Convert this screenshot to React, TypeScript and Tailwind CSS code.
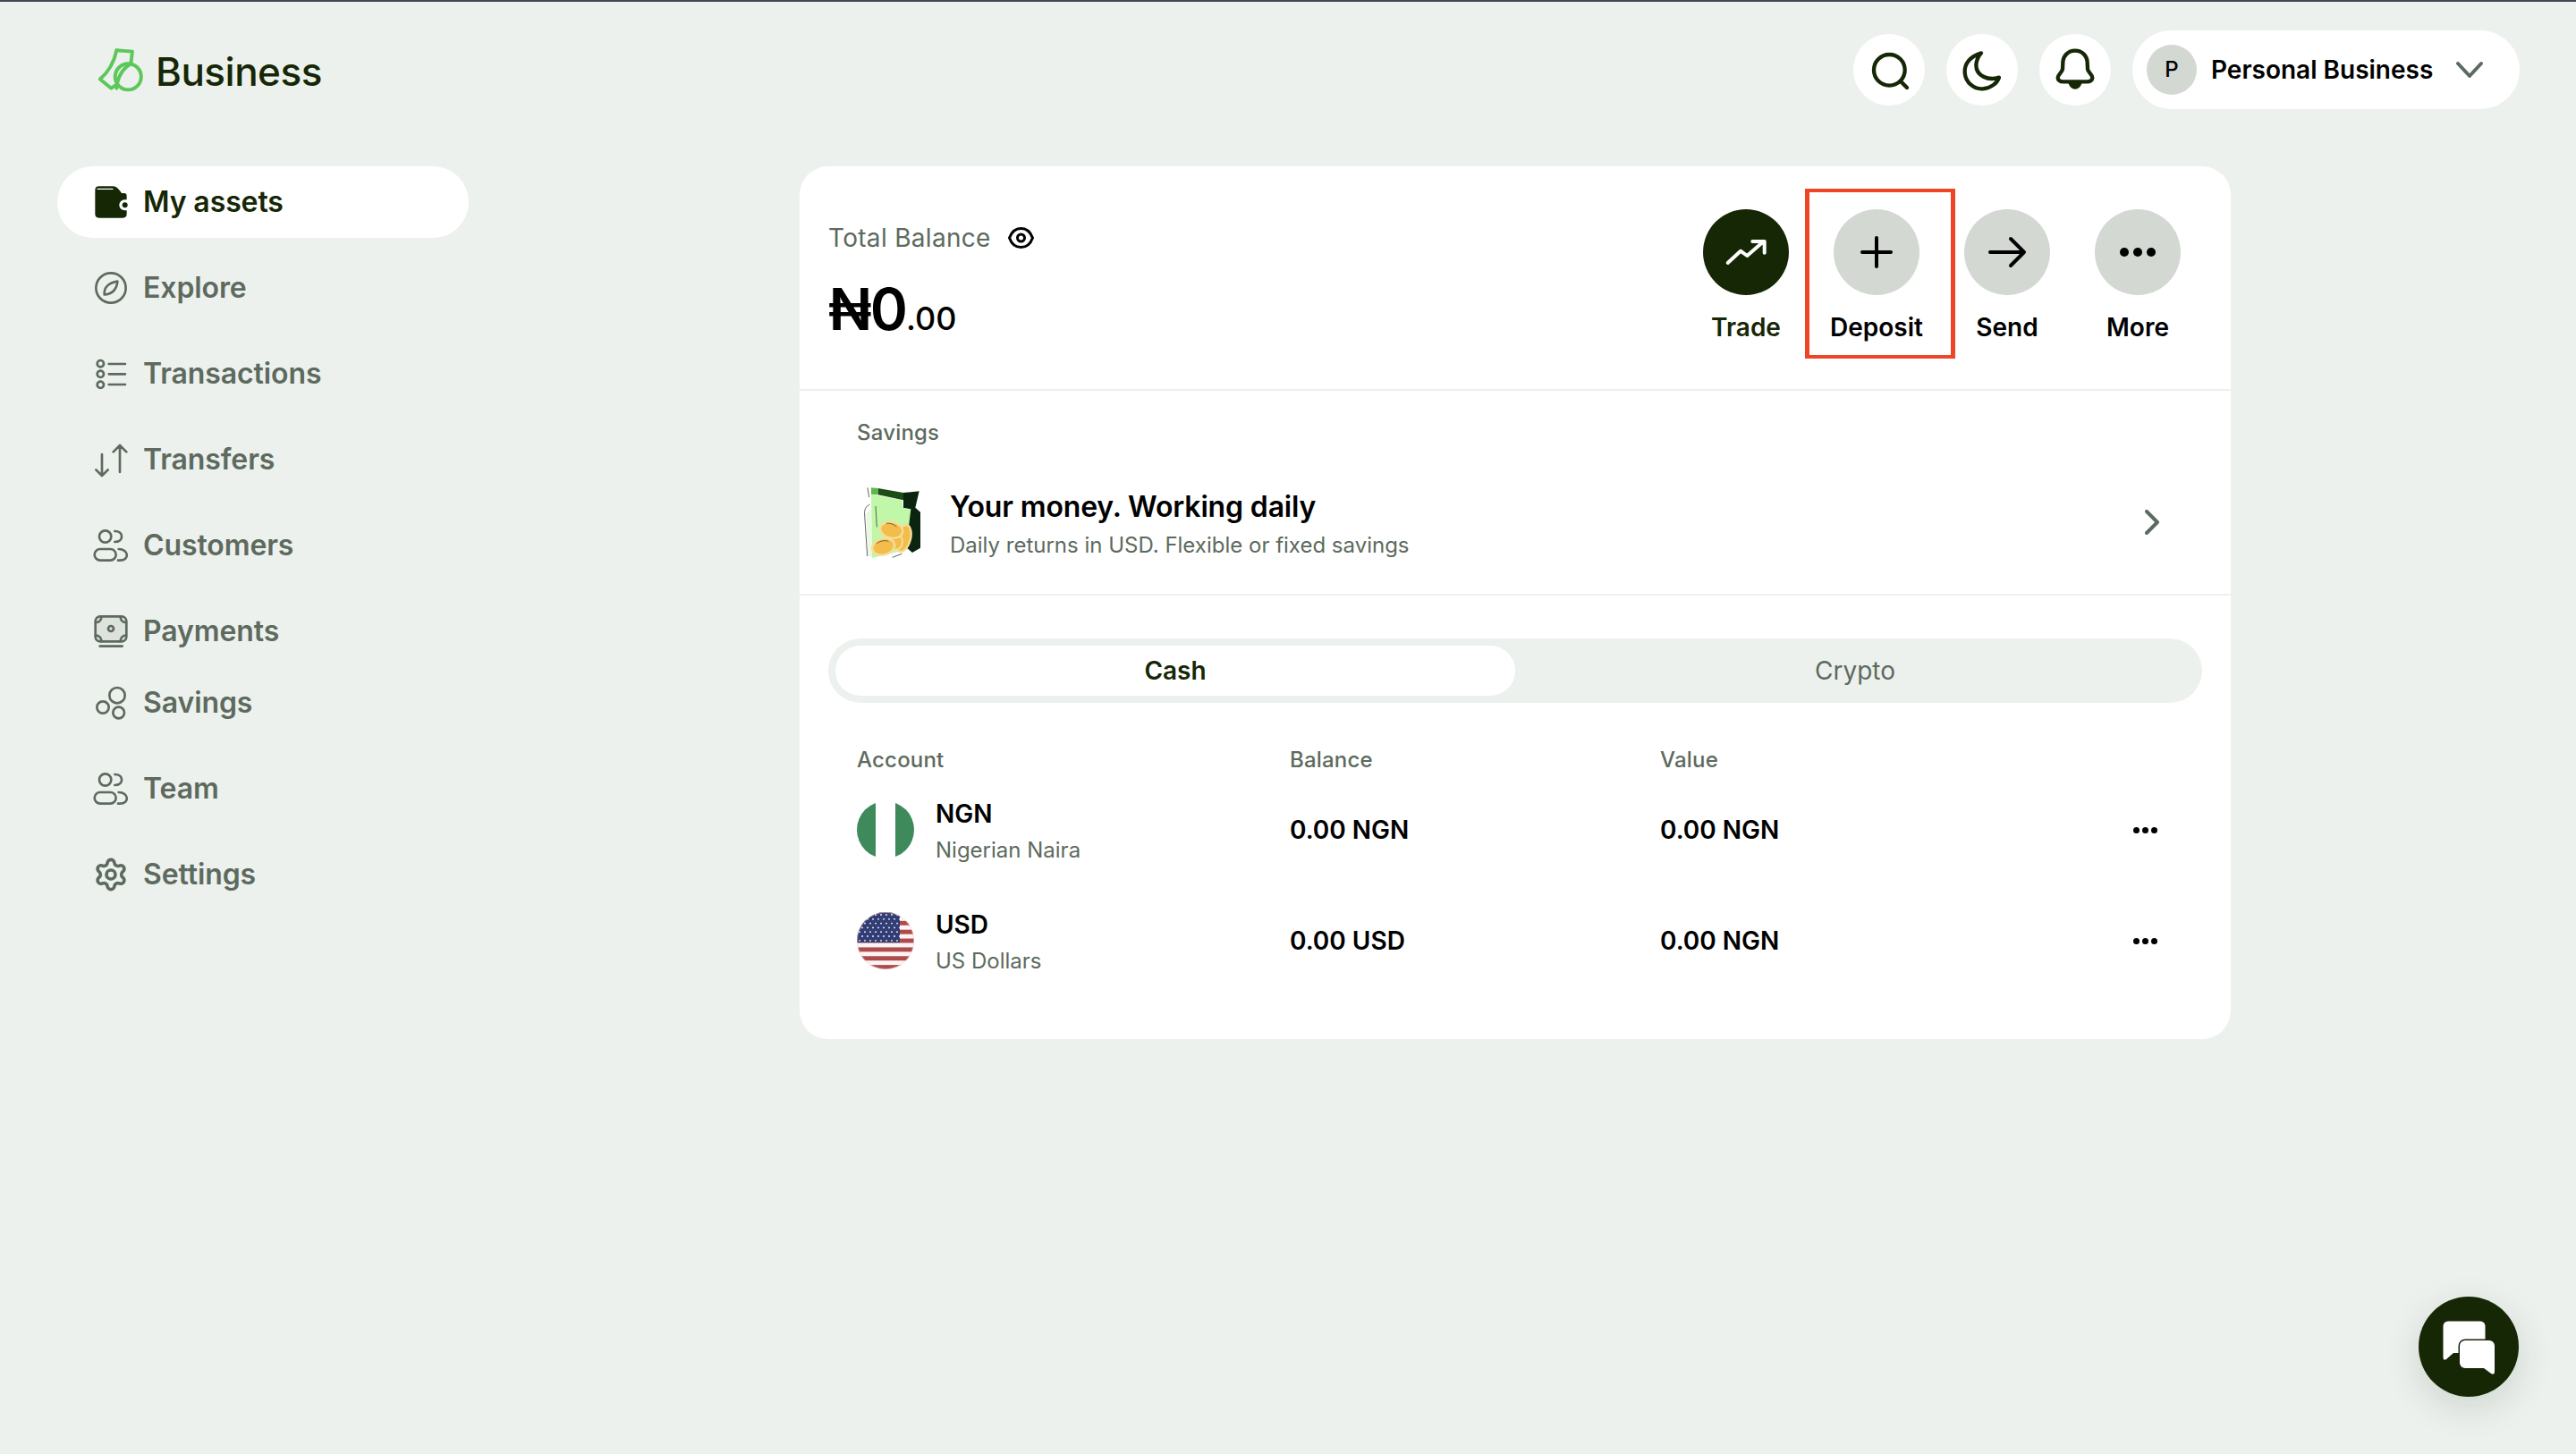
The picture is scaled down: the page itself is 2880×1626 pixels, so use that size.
import React from "react";
import { Settings } from "lucide-react";

const DARK = "#162706";
const GRAY = "#5d6a5e";

function IconBox({ children }: { children: React.ReactNode }) {
  return (
    <svg viewBox="0 0 108 108" className="w-9 h-9 shrink-0 overflow-visible" fill="none" stroke={GRAY} strokeWidth={8} strokeLinecap="round" strokeLinejoin="round">
      {children}
    </svg>
  );
}

function Wallet() {
  return (
    <svg viewBox="0 0 108 108" className="w-9 h-9 shrink-0 overflow-visible">
      <path fill={DARK} d="M14 1 H62 C72 1 80 10 90 24 H98 Q107 24 107 33 V94 Q107 107 94 107 H14 Q1 107 1 94 V14 Q1 1 14 1 Z" />
      <path d="M9 10 H60" stroke="#fff" strokeWidth={4} strokeLinecap="round" fill="none" />
      <path fill="#fff" d="M108 46 H100 A18 18 0 0 0 100 82 H108 Z" />
      <circle cx={101} cy={64} r={9} fill={DARK} />
    </svg>
  );
}

function Users() {
  return (
    <IconBox>
      <circle cx={35} cy={24} r={20} />
      <path d="M67 6 C98 6 98 42 67 42" />
      <rect x={-1} y={66} width={72} height={38} rx={19} />
      <path d="M80 66 C114 66 118 104 84 104 H78" />
    </IconBox>
  );
}

const nav = [
  { label: "Explore", icon: <IconBox><circle cx={54} cy={54} r={50} /><path d="M32 76 C30 50 50 36 76 32 C74 58 58 76 32 76 Z" /></IconBox> },
  {
    label: "Transactions",
    icon: (
      <IconBox>
        <circle cx={19} cy={20} r={11} /><circle cx={19} cy={55} r={11} /><circle cx={19} cy={91} r={11} />
        <path d="M47 21 H102 M47 55 H102 M47 90 H102" />
      </IconBox>
    ),
  },
  { label: "Transfers", icon: <IconBox><path d="M84 96 V6 M62 28 L84 6 L106 28 M24 36 V108 M4 88 L24 108 L44 88" /></IconBox> },
  { label: "Customers", icon: <Users /> },
];

function NavItem({ icon, label, active }: { icon: React.ReactNode; label: string; active?: boolean }) {
  return (
    <div className={`h-20 flex items-center gap-[18px] pl-[42px] rounded-full text-[32px] leading-10 font-semibold tracking-[-0.1px] ${active ? "bg-white text-[#162706]" : "text-[#5d6a5e]"}`}>
      {icon}
      <span>{label}</span>
    </div>
  );
}

function Sidebar() {
  return (
    <nav className="w-[460px] ml-16 shrink-0 flex flex-col gap-4">
      <NavItem active icon={<Wallet />} label="My assets" />
      {nav.map((n) => (
        <NavItem key={n.label} icon={n.icon} label={n.label} />
      ))}
      <div className="flex flex-col">
        <NavItem
          label="Payments"
          icon={
            <IconBox>
              <rect x={2} y={4} width={104} height={84} rx={16} fill="#dde2dd" />
              <circle cx={54} cy={45} r={9} />
              <path d="M3 24 C14 24 22 16 22 5 M105 24 C94 24 86 16 86 5 M3 68 C14 68 22 76 22 87 M105 68 C94 68 86 76 86 87 M17 104 H92" />
            </IconBox>
          }
        />
        <NavItem
          label="Savings"
          icon={
            <IconBox>
              <circle cx={75} cy={29} r={26} /><circle cx={27} cy={69} r={20} /><circle cx={80} cy={87} r={19} />
            </IconBox>
          }
        />
      </div>
      <NavItem icon={<Users />} label="Team" />
      <NavItem icon={<Settings size={40} strokeWidth={2.2} color={GRAY} className="shrink-0 -m-0.5" />} label="Settings" />
    </nav>
  );
}

function RoundBtn({ children }: { children: React.ReactNode }) {
  return (
    <button className="w-20 h-20 rounded-full bg-white flex items-center justify-center">
      <svg viewBox="0 0 240 240" className="w-20 h-20" fill="none" stroke={DARK} strokeWidth={13} strokeLinecap="round" strokeLinejoin="round">
        {children}
      </svg>
    </button>
  );
}

function Header() {
  return (
    <header className="flex items-center justify-between pl-[107px] pr-[63px] pt-8">
      <div className="flex items-center gap-[12px]">
        <svg viewBox="140 155 165 160" className="w-[55px] h-[53px]" fill="none" stroke="#5cc85a" strokeWidth={12} strokeLinejoin="round" strokeLinecap="round">
          <path d="M210 168 L263 172 L258 215" />
          <path d="M210 168 C202 205 186 238 154 265 L192 296 L212 282" />
          <circle cx={249} cy={257} r={44} />
          <path d="M258 214 C232 228 212 258 210 296" />
        </svg>
        <span className="mt-[3px] text-[44px] leading-[56px] font-medium text-[#162706] tracking-[-0.5px]">Business</span>
      </div>
      <div className="flex items-center gap-6">
        <RoundBtn>
          <circle cx={121} cy={121} r={52} />
          <path d="M159 159 L180 180" />
        </RoundBtn>
        <RoundBtn>
          <path d="M117 64 C80 75 60 100 62 130 C65 165 95 186 122 184 C150 182 170 165 177 146 C140 158 100 140 100 105 C100 90 108 72 117 64 Z" />
        </RoundBtn>
        <RoundBtn>
          <path d="M120 56 C97 56 80 72 79 96 L78 118 C76 130 62 136 62 147 C62 155 70 160 80 160 H160 C170 160 178 155 178 147 C178 136 164 130 162 118 L161 96 C160 72 143 56 120 56 Z" />
          <path d="M100 164 C104 175 112 182 120 182 C128 182 136 175 140 164 Z" fill={DARK} strokeWidth={6} />
        </RoundBtn>
        <div className="w-[433px] h-[88px] rounded-full bg-white flex items-center pl-4">
          <span className="w-14 h-14 rounded-full bg-[#d3d8d3] flex items-center justify-center text-2xl font-medium text-black">P</span>
          <span className="ml-4 text-[28px] leading-9 font-semibold text-black">Personal Business</span>
          <svg viewBox="0 0 32 20" className="w-8 h-5 ml-[25px]" fill="none" stroke={GRAY} strokeWidth={4} strokeLinecap="round" strokeLinejoin="round">
            <path d="M3 3 L16 17 L29 3" />
          </svg>
        </div>
      </div>
    </header>
  );
}

function Action({ label, dark, highlight, children }: { label: string; dark?: boolean; highlight?: boolean; children: React.ReactNode }) {
  return (
    <div className="relative w-24 flex flex-col items-center">
      <div className={`w-24 h-24 rounded-full ${dark ? "bg-[#162706]" : "bg-[#d3d8d3]"}`}>
        <svg viewBox="0 0 96 96" className="w-24 h-24" fill="none" stroke={dark ? "#fff" : "#000"} strokeWidth={4} strokeLinecap="round" strokeLinejoin="round">
          {children}
        </svg>
      </div>
      <span className={`mt-[18px] text-[28px] leading-9 font-semibold whitespace-nowrap ${dark ? "text-[#162706]" : "text-black"}`}>{label}</span>
      {highlight && <div className="absolute left-[-32px] top-[-23px] w-[168px] h-[190px] border-x-[5px] border-y-[4px] border-[#ee4527]" />}
    </div>
  );
}

function BalanceHeader() {
  return (
    <section className="h-[249px] flex justify-between pl-8 pr-14">
      <div className="pt-[60px]">
        <div className="flex items-center gap-[19px] text-[28px] leading-10 tracking-[0.3px] text-[#5d6a5e]">
          <span>Total Balance</span>
          <svg viewBox="0 0 29 24" className="w-[29px] h-6" fill="none" stroke="#000" strokeWidth={3}>
            <path d="M1.5 12 C4 5 9 1.5 14.5 1.5 C20 1.5 25 5 27.5 12 C25 19 20 22.5 14.5 22.5 C9 22.5 4 19 1.5 12 Z" />
            <circle cx={14.5} cy={12} r={4} />
          </svg>
        </div>
        <div className="mt-7 flex items-baseline text-black leading-[64px]">
          <span className="text-[64px] font-semibold tracking-[-2px]">₦0</span>
          <span className="text-[36px] font-medium">.00</span>
        </div>
      </div>
      <div className="pt-12 flex gap-[50px]">
        <Action label="Trade" dark>
          <path d="M27.7 60 L42 46.7 L49.3 52 L67.7 36 M55.3 36 H68.7 V48.7" />
        </Action>
        <Action label="Deposit" highlight>
          <path d="M48 32 V64 M32 48 H64" />
        </Action>
        <Action label="Send">
          <path d="M29 48 H67 M52 33 L67 48 L52 63" />
        </Action>
        <Action label="More">
          <circle cx={33} cy={48} r={5} fill="#000" stroke="none" />
          <circle cx={48} cy={48} r={5} fill="#000" stroke="none" />
          <circle cx={63} cy={48} r={5} fill="#000" stroke="none" />
        </Action>
      </div>
    </section>
  );
}

function Jar() {
  return (
    <svg viewBox="9 0 261 288" className="w-[87px] h-24 shrink-0">
      <path d="M57 50 L160 70 L165 95 L190 100 L195 232 L60 264 Z" fill="#c0f7a8" />
      <path d="M57 28 L80 30 L80 52 L57 50 Z" fill="#5cb84a" />
      <path d="M80 30 L165 45 L165 70 L80 52 Z" fill="#1d4d16" />
      <path d="M165 45 L218 40 L205 95 L222 110 L222 230 L195 246 L175 228 L190 100 L165 95 Z" fill="#0a2410" />
      <path d="M45 28 L50 60 M52 85 C40 90 33 100 35 120 L44 258 M72 90 L76 160 M128 262 L160 250" stroke="#444" strokeWidth={2.5} fill="none" />
      <path d="M40 115 L57 100 L60 262 L46 255 Z" fill="#e8f9df" />
      <ellipse cx={165} cy={198} rx={24} ry={46} transform="rotate(15 165 198)" fill="#f2bd4b" stroke="#f6dd9a" strokeWidth={7} />
      <ellipse cx={140} cy={210} rx={22} ry={26} fill="#f2bd4b" stroke="#f6dd9a" strokeWidth={6} />
      <ellipse cx={125} cy={170} rx={38} ry={27} transform="rotate(12 125 170)" fill="#f2bd4b" stroke="#f6dd9a" strokeWidth={7} />
      <ellipse cx={98} cy={226} rx={38} ry={27} transform="rotate(-15 98 226)" fill="#f2bd4b" stroke="#f6dd9a" strokeWidth={7} />
      <path d="M108 148 C122 146 135 152 142 160 M75 215 C88 206 104 204 115 208" stroke="#333" strokeWidth={2} fill="none" />
    </svg>
  );
}

function SavingsSection() {
  return (
    <section className="border-y-2 border-[#edf1ee] pl-16 pr-20 pt-[31px] pb-8">
      <div className="text-2xl leading-8 font-medium tracking-[0.2px] text-[#5d6a5e]">Savings</div>
      <div className="mt-9 h-24 flex items-center">
        <Jar />
        <div className="ml-[17px] flex-1 pt-1">
          <div className="text-[32px] leading-10 font-semibold tracking-[-0.15px] text-black">Your money. Working daily</div>
          <div className="mt-[7px] text-2xl leading-8 text-[#5d6a5e]">Daily returns in USD. Flexible or fixed savings</div>
        </div>
        <svg viewBox="0 0 16 28" className="w-4 h-7" fill="none" stroke={GRAY} strokeWidth={4} strokeLinecap="round" strokeLinejoin="round">
          <path d="M2 2 L14 14 L2 26" />
        </svg>
      </div>
    </section>
  );
}

function Tabs() {
  return (
    <div className="mt-12 mx-8 h-[72px] p-2 rounded-full bg-[#edf1ee] grid grid-cols-2 text-[28px] leading-9">
      <div className="rounded-full bg-white flex items-center justify-center font-semibold text-[#162706]">Cash</div>
      <div className="flex items-center justify-center text-[#5d6a5e]">Crypto</div>
    </div>
  );
}

function NigeriaFlag() {
  return (
    <svg viewBox="0 0 64 64" className="w-16 h-16 shrink-0">
      <clipPath id="ng"><circle cx={32} cy={32} r={32} /></clipPath>
      <g clipPath="url(#ng)">
        <rect width={64} height={64} fill="#fff" />
        <rect width={21} height={64} fill="#3e8a5b" />
        <rect x={43} width={21} height={64} fill="#3e8a5b" />
      </g>
    </svg>
  );
}

function UsFlag() {
  const stripes = Array.from({ length: 7 }, (_, i) => i);
  const stars: [number, number][] = [];
  for (let r = 0; r < 7; r++) for (let c = 0; c < 8; c++) stars.push([3 + c * 6 + (r % 2 ? 3 : 0), 3 + r * 4.8]);
  return (
    <svg viewBox="0 0 64 64" className="w-16 h-16 shrink-0">
      <clipPath id="us"><circle cx={32} cy={32} r={32} /></clipPath>
      <g clipPath="url(#us)">
        <rect width={64} height={64} fill="#fbf4f4" />
        {stripes.map((i) => (
          <rect key={i} y={i * 9.85} width={64} height={4.92} fill="#af4b4d" />
        ))}
        <rect width={48} height={34} fill="#333d75" />
        {stars.map(([x, y], i) => (
          <circle key={i} cx={x} cy={y} r={0.9} fill="#fff" />
        ))}
      </g>
      <circle cx={32} cy={32} r={31.7} fill="none" stroke="#eccfcf" strokeWidth={0.6} />
    </svg>
  );
}

function Row({ flag, code, name, balance }: { flag: React.ReactNode; code: string; name: string; balance: string }) {
  return (
    <div className="h-[124px] grid grid-cols-[484px_414px_1fr_27px] items-center text-[28px] font-semibold text-black">
      <div className="flex items-center gap-6">
        {flag}
        <div className="pt-1">
          <div className="leading-10">{code}</div>
          <div className="mt-px text-2xl leading-10 font-normal text-[#5d6a5e]">{name}</div>
        </div>
      </div>
      <div>{balance}</div>
      <div>0.00 NGN</div>
      <svg viewBox="0 0 27 7" className="w-[27px] h-[7px]" fill="#000">
        <circle cx={3.5} cy={3.5} r={3.5} /><circle cx={13.5} cy={3.5} r={3.5} /><circle cx={23.5} cy={3.5} r={3.5} />
      </svg>
    </div>
  );
}

function Accounts() {
  return (
    <div className="mt-12 pl-16 pr-[82px] pb-12">
      <div className="grid grid-cols-[484px_414px_1fr_27px] text-2xl leading-8 font-medium tracking-[0.2px] text-[#5d6a5e]">
        <div>Account</div>
        <div>Balance</div>
        <div>Value</div>
      </div>
      <Row flag={<NigeriaFlag />} code="NGN" name="Nigerian Naira" balance="0.00 NGN" />
      <Row flag={<UsFlag />} code="USD" name="US Dollars" balance="0.00 USD" />
    </div>
  );
}

function ChatButton() {
  return (
    <button className="absolute right-16 bottom-16 w-28 h-28 rounded-full bg-[#162706] shadow-[0_12px_40px_rgba(22,39,6,0.14)]">
      <svg viewBox="0 0 112 112" className="w-28 h-28">
        <path fill="#fff" d="M27.5 33 A5.5 5.5 0 0 1 33 27.5 H69 A5.5 5.5 0 0 1 74.5 33 V63 H39 L31 70 Q27.5 72 27.5 68 Z" />
        <path fill="#fff" stroke="#162706" strokeWidth={3} paintOrder="stroke" d="M52 49 H79 A6 6 0 0 1 85 55 V84 Q85 88 81 86 L73 80 H52 A6 6 0 0 1 46 74 V55 A6 6 0 0 1 52 49 Z" />
      </svg>
    </button>
  );
}

export default function App() {
  return (
    <div className="relative w-[2880px] h-[1626px] overflow-hidden bg-[#edf1ee] border-t-2 border-[#42474f] [font-family:Inter,sans-serif]">
      <Header />
      <div className="mt-16 flex">
        <Sidebar />
        <main className="ml-[370px] w-[1600px] bg-white rounded-[32px] overflow-hidden">
          <BalanceHeader />
          <SavingsSection />
          <Tabs />
          <Accounts />
        </main>
      </div>
      <ChatButton />
    </div>
  );
}
